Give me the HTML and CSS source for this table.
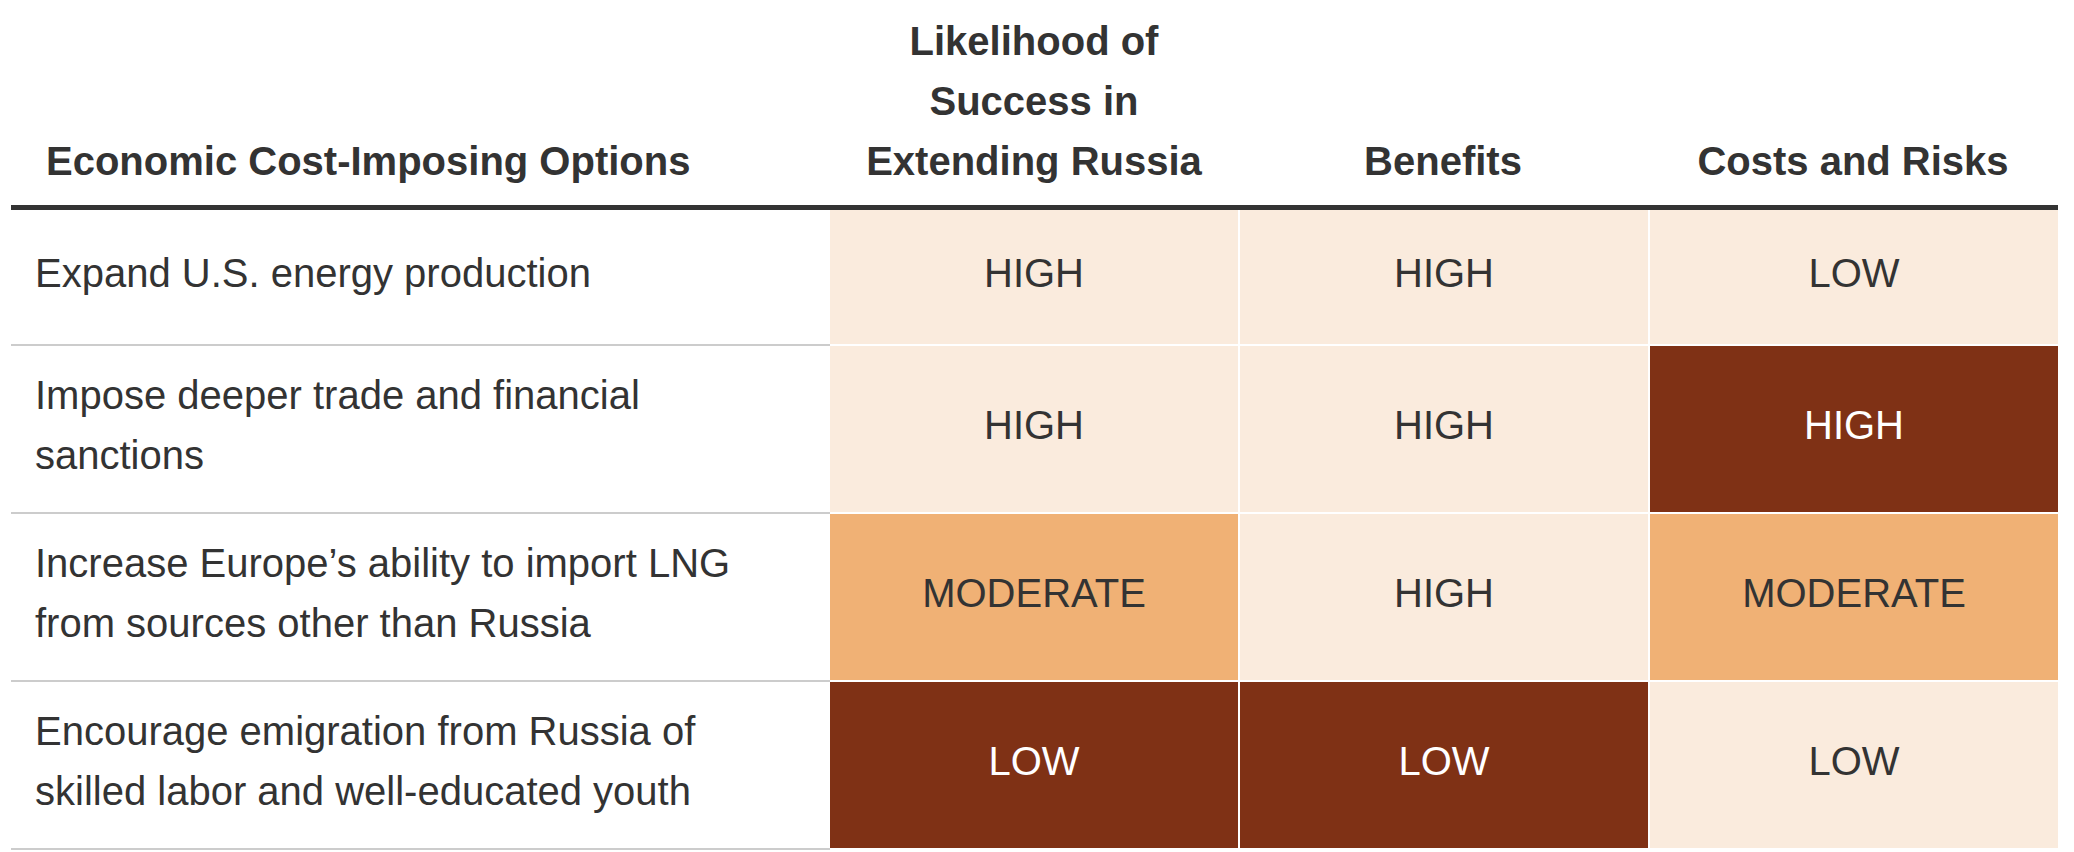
FILE: index.html
```html
<!DOCTYPE html>
<html lang="en">
<head>
<meta charset="utf-8">
<title>Economic Cost-Imposing Options</title>
<link rel="stylesheet" href="styles.css">
</head>
<body>
<table class="options">
  <colgroup>
    <col class="col-option">
    <col class="col-likelihood">
    <col class="col-benefits">
    <col class="col-costs">
  </colgroup>
  <thead>
    <tr>
      <th class="head head-option">Economic Cost-Imposing Options</th>
      <th class="head head-rating">Likelihood of Success in Extending Russia</th>
      <th class="head head-rating">Benefits</th>
      <th class="head head-rating">Costs and Risks</th>
    </tr>
  </thead>
  <tbody>
    <tr>
      <td class="option">Expand U.S. energy production</td>
      <td class="rating light first">HIGH</td>
      <td class="rating light">HIGH</td>
      <td class="rating light">LOW</td>
    </tr>
    <tr>
      <td class="option">Impose deeper trade and financial sanctions</td>
      <td class="rating light first">HIGH</td>
      <td class="rating light">HIGH</td>
      <td class="rating dark">HIGH</td>
    </tr>
    <tr>
      <td class="option">Increase Europe’s ability to import LNG from sources other than Russia</td>
      <td class="rating medium first">MODERATE</td>
      <td class="rating light">HIGH</td>
      <td class="rating medium">MODERATE</td>
    </tr>
    <tr>
      <td class="option">Encourage emigration from Russia of skilled labor and well-educated youth</td>
      <td class="rating dark first">LOW</td>
      <td class="rating dark">LOW</td>
      <td class="rating light">LOW</td>
    </tr>
  </tbody>
</table>
</body>
</html>
```

FILE: styles.css
```css
html, body {
  margin: 0;
  padding: 0;
  background: #ffffff;
}

body {
  font-family: "Liberation Sans", Arial, Helvetica, sans-serif;
  color: #333333;
}

.options {
  margin: 11px 16px 0 11px;
  width: 2047px;
  table-layout: fixed;
  border-collapse: separate;
  border-spacing: 0;
  font-size: 40px;
  line-height: 60px;
}

.col-option { width: 819px; }
.col-likelihood { width: 408px; }
.col-benefits { width: 410px; }
.col-costs { width: 410px; }

.head {
  font-weight: bold;
  vertical-align: bottom;
  padding: 0 20px 14px;
  border-bottom: 5px solid #333333;
}

.head.head-option {
  text-align: left;
  padding-left: 35px;
}

.head.head-rating {
  text-align: center;
}

.options td {
  vertical-align: middle;
}

.option {
  padding: 19px 60px 27px 24px;
  border-bottom: 2px solid #cccccc;
}

.rating {
  text-align: center;
  padding: 33px 10px 41px;
  border-bottom: 2px solid #ffffff;
  border-left: 2px solid #ffffff;
}

.rating.first {
  border-left: 0;
}

.light {
  background: #faebdd;
  color: #333333;
}

.medium {
  background: #f0b175;
  color: #333333;
}

.dark {
  background: #7f3115;
  color: #ffffff;
}
```
